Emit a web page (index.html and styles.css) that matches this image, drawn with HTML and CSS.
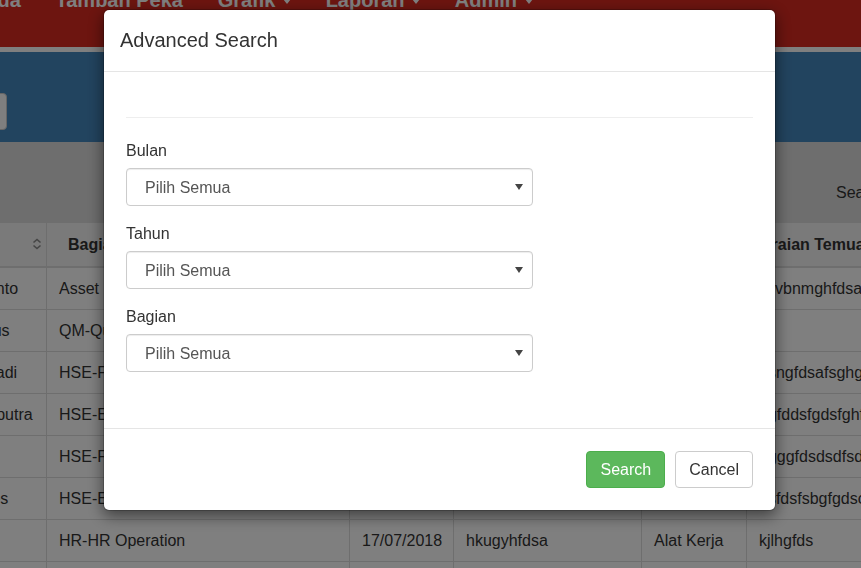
FILE: index.html
```html
<!DOCTYPE html>
<html lang="id">
<head>
<meta charset="utf-8">
<title>Advanced Search</title>
<link rel="stylesheet" href="styles.css">
</head>
<body>
<nav class="navbar">
  <ul class="nav">
    <li>Beranda</li>
    <li>Tambah Peka</li>
    <li>Grafik <span class="caret"></span></li>
    <li>Laporan <span class="caret"></span></li>
    <li>Admin <span class="caret"></span></li>
  </ul>
</nav>
<header class="page-head">
  <button class="head-btn" type="button">Kembali</button>
</header>
<section class="dt-top">
  <label class="dt-search">Search: <input type="search"></label>
</section>
<table class="data">
  <colgroup>
    <col class="c1"><col class="c2"><col class="c3"><col class="c4"><col class="c5"><col class="c6">
  </colgroup>
  <thead>
    <tr>
      <th>Nama <span class="sort"><svg width="10" height="12" viewBox="0 0 10 12"><path d="M1.5 4.5 5 1.5 8.5 4.5M1.5 7.5 5 10.5 8.5 7.5" fill="none" stroke="#8a8a8a" stroke-width="1.6"/></svg></span></th>
      <th>Bagian</th>
      <th>Tanggal</th>
      <th>Temuan</th>
      <th>Kategori</th>
      <th class="th-last">Uraian Temuan</th>
    </tr>
  </thead>
  <tbody>
    <tr><td>Bambang Sugiyanto</td><td>Asset Management</td><td>12/07/2018</td><td>asdfghjkl</td><td>Unsafe Act</td><td>xcvbnmghfdsa</td></tr>
    <tr><td>Yohanes Agustinus</td><td>QM-Quality Control</td><td>13/07/2018</td><td>qwertyui</td><td>Lingkungan</td><td></td></tr>
    <tr><td>Muhammad Suryadi</td><td>HSE-Fire &amp; Safety</td><td>14/07/2018</td><td>zxcvbnm</td><td>Unsafe Act</td><td>asngfdsafsghgh</td></tr>
    <tr><td>Yohanes Dika Saputra</td><td>HSE-Environment</td><td>15/07/2018</td><td>poiuytre</td><td>Alat Kerja</td><td>hgfddsfgdsfghfd</td></tr>
    <tr><td></td><td>HSE-Fire &amp; Safety</td><td>16/07/2018</td><td>lkjhgfd</td><td>Lingkungan</td><td>dgggfdsdsdfsdg</td></tr>
    <tr><td>Bambang Yohanes</td><td>HSE-Environment</td><td>16/07/2018</td><td>mnbvcxz</td><td>Unsafe Act</td><td>dsfdsfsbgfgdsc</td></tr>
    <tr><td></td><td>HR-HR Operation</td><td>17/07/2018</td><td>hkugyhfdsa</td><td>Alat Kerja</td><td>kjlhgfds</td></tr>
    <tr><td></td><td>HR-HR Operation</td><td>18/07/2018</td><td>ytrewq</td><td>Alat Kerja</td><td>lkjhg</td></tr>
  </tbody>
</table>

<div class="backdrop"></div>
<div class="modal">
  <div class="modal-dialog">
    <div class="modal-header">
      <h4 class="modal-title">Advanced Search</h4>
    </div>
    <div class="modal-body">
      <hr class="divider">
      <div class="form-group">
        <label class="form-label" for="bulan">Bulan</label>
        <div class="select-wrap">
          <select id="bulan" class="form-control"><option>Pilih Semua</option></select>
        </div>
      </div>
      <div class="form-group">
        <label class="form-label" for="tahun">Tahun</label>
        <div class="select-wrap">
          <select id="tahun" class="form-control"><option>Pilih Semua</option></select>
        </div>
      </div>
      <div class="form-group">
        <label class="form-label" for="bagian">Bagian</label>
        <div class="select-wrap">
          <select id="bagian" class="form-control"><option>Pilih Semua</option></select>
        </div>
      </div>
    </div>
    <div class="modal-footer">
      <button class="btn btn-success" type="button">Search</button>
      <button class="btn btn-default" type="button">Cancel</button>
    </div>
  </div>
</div>
</body>
</html>
```
FILE: styles.css
```css
html, body {
  margin: 0;
  height: 100%;
  overflow: hidden;
}
body {
  font-family: "Liberation Sans", Arial, sans-serif;
  font-size: 16px;
  line-height: 23px;
  color: #333;
  background: #fff;
}

/* navbar */
.navbar {
  background: #da2a20;
  height: 47px;
  overflow: hidden;
  margin-bottom: 5px;
}
.nav {
  list-style: none;
  margin: -12px 0 0 -76.5px;
  padding: 0;
  display: flex;
}
.nav li {
  padding: 0 17.33px;
  font-size: 20px;
  font-weight: bold;
  line-height: 24px;
  color: #fff;
  white-space: nowrap;
}
.caret {
  display: inline-block;
  width: 0;
  height: 0;
  border-top: 5px solid #fff;
  border-left: 4px solid transparent;
  border-right: 4px solid transparent;
  vertical-align: middle;
  margin-left: 2px;
}

/* page header band */
.page-head {
  background: #4588be;
  height: 90px;
  display: flex;
  align-items: flex-start;
}
.head-btn {
  margin: 41px 0 0 -73px;
  width: 80px;
  height: 37px;
  background: #fff;
  border: 1px solid #ccc;
  border-radius: 4px;
  font: inherit;
  color: #333;
}

/* datatable top */
.dt-top {
  background: #dcdcdc;
  height: 80px;
  padding-top: 35px;
  box-sizing: border-box;
  white-space: nowrap;
}
.dt-search {
  margin-left: 836px;
  display: inline-flex;
  gap: 6px;
  align-items: center;
}
.dt-search input {
  width: 200px;
  height: 30px;
  border: 1px solid #ccc;
  border-radius: 4px;
}

/* table */
.data {
  margin-left: -139px;
  width: 1189px;
  border-collapse: collapse;
  table-layout: fixed;
  background: #fff;
}
.c1 { width: 185px; }
.c2 { width: 303px; }
.c3 { width: 104px; }
.c4 { width: 188px; }
.c5 { width: 105px; }
.c6 { width: 304px; }
.data th,
.data td {
  border: 1px solid #ddd;
  padding: 9px 12px;
  text-align: left;
  white-space: nowrap;
  overflow: hidden;
  height: 23px;
}
.data th {
  padding: 10px 19px 10px 21px;
  border-bottom-width: 2px;
  font-weight: bold;
  background: #f4f4f4;
}
.data th.th-last {
  padding-left: 13px;
}
.sort {
  float: right;
  margin: 5px -15px 0 0;
  line-height: 0;
}

/* modal */
.backdrop {
  position: fixed;
  inset: 0;
  background: rgba(0, 0, 0, 0.5);
}
.modal {
  position: fixed;
  inset: 0;
}
.modal-dialog {
  width: 673px;
  margin: 9px 0 0 103px;
  box-sizing: border-box;
  background: #fff;
  background-clip: padding-box;
  border: 1px solid rgba(0, 0, 0, 0.2);
  border-radius: 6px;
  box-shadow: 0 5px 15px rgba(0, 0, 0, 0.5);
}
.modal-header {
  padding: 19px 16px;
  border-bottom: 1px solid #e5e5e5;
}
.modal-title {
  margin: 0;
  font-size: 20px;
  font-weight: normal;
  line-height: 23px;
  color: #333;
}
.modal-body {
  padding: 22px 22px 40px;
}
.divider {
  margin: 23px 0 21px;
  border: 0;
  border-top: 1px solid #eee;
}
.form-group {
  margin-bottom: 16px;
}
.form-label {
  display: block;
  margin-bottom: 6px;
  color: #333;
}
.select-wrap {
  position: relative;
  width: 407px;
}
.form-control {
  appearance: none;
  -webkit-appearance: none;
  display: block;
  width: 100%;
  height: 38px;
  box-sizing: border-box;
  border: 1px solid #ccc;
  border-radius: 4px;
  padding: 0 18px;
  font: inherit;
  color: #555;
  background: #fff;
  box-shadow: inset 0 1px 1px rgba(0, 0, 0, 0.075);
}
.select-wrap::after {
  content: "";
  position: absolute;
  right: 10px;
  top: 16px;
  border-top: 6px solid #444;
  border-left: 4px solid transparent;
  border-right: 4px solid transparent;
  pointer-events: none;
}
.modal-footer {
  padding: 22px;
  border-top: 1px solid #e5e5e5;
  display: flex;
  justify-content: flex-end;
  gap: 10px;
}
.btn {
  font: inherit;
  line-height: 23px;
  padding: 6px 13px;
  border: 1px solid transparent;
  border-radius: 4px;
  cursor: pointer;
}
.btn-success {
  color: #fff;
  background: #5cb85c;
  border-color: #4cae4c;
}
.btn-default {
  color: #333;
  background: #fff;
  border-color: #ccc;
}
```
